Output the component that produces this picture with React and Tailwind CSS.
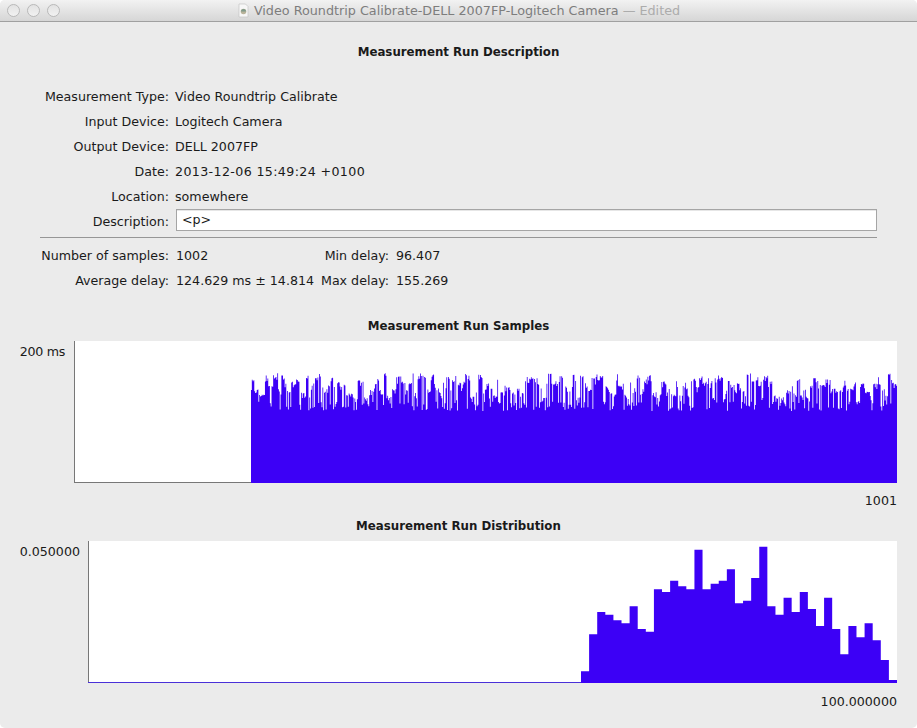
const FONT = "font-['DejaVu_Sans',sans-serif]";

const HIST = [408,297,230,238,255,264,213,281,289,162,170,136,153,162,43,162,145,136,102,204,196,128,34,213,238,187,230,170,221,272,187,281,357,272,306,264,315,374,434];

function makeSamples() {
  let seed = 1337;
  const rnd = () => {
    seed = (seed * 1664525 + 1013904223) >>> 0;
    return seed / 4294967296;
  };
  const out = [];
  let target = 0.6;
  let left = 0;
  for (let i = 0; i < 787; i++) {
    if (left === 0) {
      target = 0.35 + 0.65 * rnd();
      left = 2 + Math.floor(rnd() * 5);
    }
    left -= 1;
    const r = rnd();
    const dip = rnd() < 0.22 ? 0.25 * rnd() : target - 0.2 * r * r;
    out.push(Math.max(0, Math.min(dip, 1)));
  }
  out[0] = 0.55;
  return out;
}

const SAMPLES = makeSamples();

function stepPath(values, start, step, h) {
  let d = `M${start} ${h}`;
  values.forEach((bar, i) => {
    d += `L${start + i * step} ${h - bar}L${start + (i + 1) * step} ${h - bar}`;
  });
  return `${d}L${start + values.length * step} ${h}Z`;
}

function SamplesChart() {
  const w = 823;
  const h = 142;
  const start = 177;
  const step = (w - start) / SAMPLES.length;
  const bars = SAMPLES.map((v) => 72 + v * 38);
  return (
    <svg width={w} height={h} className="block" aria-hidden="true">
      <rect x="0" y="0" width="1" height={h} fill="#777777" />
      <rect x="0" y={h - 1} width={start} height="1" fill="#777777" />
      <path d={stepPath(bars, start, step, h)} fill="#3c00f6" />
    </svg>
  );
}

function DistributionChart() {
  const w = 809;
  const h = 142;
  const start = 493;
  const step = (w - start) / HIST.length;
  const bars = HIST.map((t) => (443 - t) / 3);
  return (
    <svg width={w} height={h} className="block" aria-hidden="true">
      <rect x="0" y="0" width="1" height={h} fill="#777777" />
      <rect x="0" y={h - 1} width={start} height="1" fill="#4a30d8" />
      <path d={stepPath(bars, start, step, h)} fill="#3c00f6" />
    </svg>
  );
}

function Row({ label, children }) {
  return (
    <div className="flex h-[25px] items-center">
      <div className="w-[169px] text-right whitespace-pre">{label}</div>
      <div className="ml-[6px] flex-1 whitespace-pre">{children}</div>
    </div>
  );
}

function Light() {
  return <div className="h-[13px] w-[13px] rounded-full border-[1.5px] border-[#b8b8b8] bg-gradient-to-b from-[#e2e2e2] to-[#f2f2f2]" />;
}

export default function App() {
  return (
    <div className={`${FONT} h-[728px] w-[917px] overflow-hidden rounded-[5px] bg-[#ebebeb] text-[12.65px] leading-[15px] text-[#1a1a1a]`}>
      <div className="relative flex h-[22px] items-center justify-center border-b border-[#a0a0a0] bg-gradient-to-b from-[#f2f2f2] to-[#d6d6d6]">
        <div className="absolute left-[7px] top-[4px] flex gap-[7px]">
          <Light />
          <Light />
          <Light />
        </div>
        <svg width="13" height="15" viewBox="0 0 13 15" className="mr-[4px]" aria-hidden="true">
          <path d="M2 1h6.5L11 3.5V14H2z" fill="#f7f7f7" stroke="#c4c4c4" strokeWidth="0.7" />
          <circle cx="6.5" cy="8.5" r="2.8" fill="#b9b39a" />
          <path d="M4 8.5a2.5 2.5 0 0 1 5 0z" fill="#7f9a8a" />
        </svg>
        <span className="text-[12.75px] text-[#7d7d7d]">
          Video Roundtrip Calibrate-DELL 2007FP-Logitech Camera <span className="text-[#acacac]">— Edited</span>
        </span>
      </div>

      <div className="pt-[23px] text-center text-[11.8px] font-bold">Measurement Run Description</div>

      <div className="mt-[24px]">
        <Row label="Measurement Type:">Video Roundtrip Calibrate</Row>
        <Row label="Input Device:">Logitech Camera</Row>
        <Row label="Output Device:">DELL 2007FP</Row>
        <Row label="Date:"><span className="tracking-[0.36px]">2013-12-06 15:49:24 +0100</span></Row>
        <Row label="Location:">somewhere</Row>
        <div className="flex h-[25px] items-center">
          <div className="w-[169px] text-right">Description:</div>
          <div className="ml-[7px] -mt-[4px] flex h-[22px] w-[701px] items-center border border-[#a5a5a5] bg-white pl-[5px] shadow-[inset_0_1px_0_#e6e6e6]">&lt;p&gt;</div>
        </div>
      </div>

      <div className="mx-[40px] mt-[3px] h-px bg-[#969696]" />

      <div className="mt-[5px]">
        <div className="flex h-[25px] items-center">
          <div className="w-[169px] text-right">Number of samples:</div>
          <div className="ml-[7px] w-[138px]">1002</div>
          <div className="w-[75px] text-right whitespace-pre">Min delay:</div>
          <div className="ml-[7px]">96.407</div>
        </div>
        <div className="flex h-[25px] items-center">
          <div className="w-[169px] text-right">Average delay:</div>
          <div className="ml-[7px] w-[138px] whitespace-pre">124.629 ms ± 14.814</div>
          <div className="w-[75px] text-right whitespace-pre">Max delay:</div>
          <div className="ml-[7px]">155.269</div>
        </div>
      </div>

      <div className="mt-[26px] text-center text-[11.8px] font-bold">Measurement Run Samples</div>
      <div className="mt-[7px] flex">
        <div className="w-[65px] pt-[3px] text-right tracking-[-0.3px]">200 ms</div>
        <div className="ml-[9px] bg-white">
          <SamplesChart />
        </div>
      </div>
      <div className="mt-[10px] pr-[20px] text-right">1001</div>

      <div className="mt-[11px] text-center text-[11.8px] font-bold">Measurement Run Distribution</div>
      <div className="mt-[7px] flex">
        <div className="w-[80px] pt-[3px] text-right">0.050000</div>
        <div className="ml-[8px] bg-white">
          <DistributionChart />
        </div>
      </div>
      <div className="mt-[11px] pr-[20px] text-right">100.000000</div>
    </div>
  );
}
